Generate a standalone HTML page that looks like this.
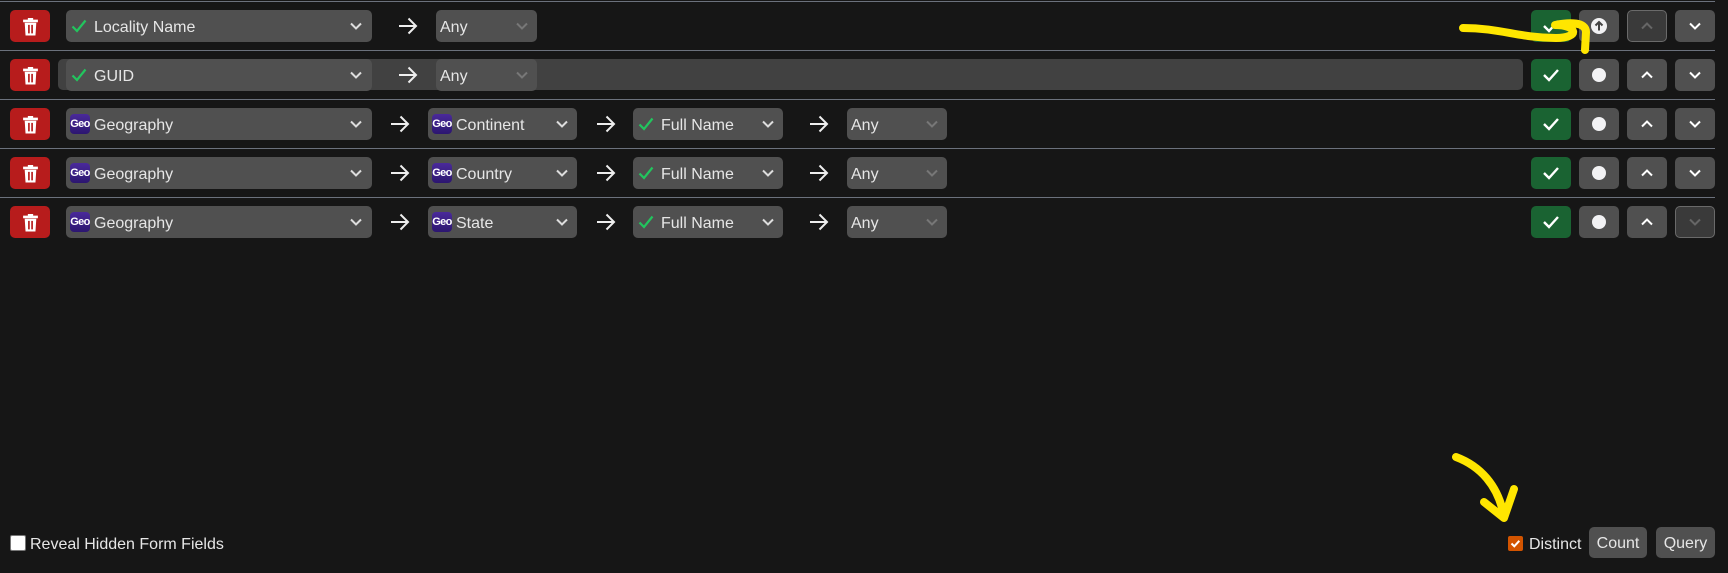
<!DOCTYPE html>
<html><head><meta charset="utf-8"><style>
*{box-sizing:border-box;margin:0;padding:0}
body{width:1728px;height:573px;background:#161616;font-family:"Liberation Sans",sans-serif;color:#e6e6e6;position:relative;overflow:hidden}
.a{position:absolute}
.sep{position:absolute;left:0;width:1715px;height:1px;background:#6b717c}
.tr{position:absolute;left:10px;width:40px;height:32px;background:#b71c1c;border-radius:5px;display:flex;align-items:center;justify-content:center}
.sel{position:absolute;height:32px;background:#505050;border-radius:5px;font-size:16px;display:flex;align-items:center}
.sel .t{position:absolute;top:9px}
.chev{position:absolute;top:12px}
.geo{position:absolute;top:6px;width:20px;height:20px;border-radius:4px;background:linear-gradient(#4a2a9a,#2c1670);color:#fff;font-size:11px;font-weight:bold;display:flex;align-items:center;justify-content:center;letter-spacing:-0.6px}
.btn{position:absolute;width:40px;height:32px;border-radius:5px;background:#505050;display:flex;align-items:center;justify-content:center}
.g{background:#1a6332}
.dis{background:#3a3a3a;border:1px solid #6a6a6a}
</style></head><body>
<div class="sep" style="top:1px"></div>
<div class="sep" style="top:50px"></div>
<div class="sep" style="top:99px"></div>
<div class="sep" style="top:148px"></div>
<div class="sep" style="top:197px"></div>

<div class="a" style="left:58px;top:59px;width:1465px;height:31px;background:#414141;border-radius:5px"></div>

<svg width="0" height="0" style="position:absolute">
<defs>
<symbol id="trash" viewBox="0 0 16 18"><path d="M1 2.5h14v2.5H1z M5.5 1h5v2h-5z M2.5 5.5h11l-0.8 12H3.3z" fill="#fff"/><path d="M6.5 7.5v8M9.5 7.5v8" stroke="#b71c1c" stroke-width="1.6"/></symbol>
<symbol id="chev" viewBox="0 0 12 8"><path d="M1 1.5l5 5 5-5" fill="none" stroke="currentColor" stroke-width="2"/></symbol>
<symbol id="chk" viewBox="0 0 16 14"><path d="M1.5 7.5l4.5 4.5L14.5 1.5" fill="none" stroke="#22c55e" stroke-width="2.2"/></symbol>
<symbol id="arr" viewBox="0 0 20 18"><path d="M1 9h17M10.5 1.5L18 9l-7.5 7.5" fill="none" stroke="#eee" stroke-width="2"/></symbol>
<symbol id="wchk" viewBox="0 0 18 14"><path d="M2 7l5 5L16 2" fill="none" stroke="#fff" stroke-width="2.4"/></symbol>
</defs></svg>

<div class="tr" style="top:10px"><svg width="17" height="19"><use href="#trash"/></svg></div>
<div class="sel" style="left:66px;top:10px;width:306px"><svg class="a" style="left:5px;top:9px" width="16" height="14"><use href="#chk"/></svg><span class="t" style="left:28px">Locality Name</span><svg class="chev" style="left:284px;color:#ddd" width="12" height="8"><use href="#chev"/></svg></div>
<svg class="a" style="left:398px;top:17px" width="20" height="18"><use href="#arr"/></svg>
<div class="sel" style="left:436px;top:10px;width:101px"><span class="t" style="left:4px">Any</span><svg class="chev" style="left:80px;color:#777" width="12" height="8"><use href="#chev"/></svg></div>

<div class="tr" style="top:59px"><svg width="17" height="19"><use href="#trash"/></svg></div>
<div class="sel" style="left:66px;top:59px;width:306px"><svg class="a" style="left:5px;top:9px" width="16" height="14"><use href="#chk"/></svg><span class="t" style="left:28px">GUID</span><svg class="chev" style="left:284px;color:#ddd" width="12" height="8"><use href="#chev"/></svg></div>
<svg class="a" style="left:398px;top:66px" width="20" height="18"><use href="#arr"/></svg>
<div class="sel" style="left:436px;top:59px;width:101px"><span class="t" style="left:4px">Any</span><svg class="chev" style="left:80px;color:#777" width="12" height="8"><use href="#chev"/></svg></div>

<div class="tr" style="top:108px"><svg width="17" height="19"><use href="#trash"/></svg></div>
<div class="sel" style="left:66px;top:108px;width:306px"><div class="geo" style="left:4px">Geo</div><span class="t" style="left:28px">Geography</span><svg class="chev" style="left:284px;color:#ddd" width="12" height="8"><use href="#chev"/></svg></div>
<svg class="a" style="left:390px;top:115px" width="20" height="18"><use href="#arr"/></svg>
<div class="sel" style="left:428px;top:108px;width:149px"><div class="geo" style="left:4px">Geo</div><span class="t" style="left:28px">Continent</span><svg class="chev" style="left:128px;color:#ddd" width="12" height="8"><use href="#chev"/></svg></div>
<svg class="a" style="left:596px;top:115px" width="20" height="18"><use href="#arr"/></svg>
<div class="sel" style="left:633px;top:108px;width:150px"><svg class="a" style="left:5px;top:9px" width="16" height="14"><use href="#chk"/></svg><span class="t" style="left:28px">Full Name</span><svg class="chev" style="left:129px;color:#ddd" width="12" height="8"><use href="#chev"/></svg></div>
<svg class="a" style="left:809px;top:115px" width="20" height="18"><use href="#arr"/></svg>
<div class="sel" style="left:847px;top:108px;width:100px"><span class="t" style="left:4px">Any</span><svg class="chev" style="left:79px;color:#777" width="12" height="8"><use href="#chev"/></svg></div>

<div class="tr" style="top:157px"><svg width="17" height="19"><use href="#trash"/></svg></div>
<div class="sel" style="left:66px;top:157px;width:306px"><div class="geo" style="left:4px">Geo</div><span class="t" style="left:28px">Geography</span><svg class="chev" style="left:284px;color:#ddd" width="12" height="8"><use href="#chev"/></svg></div>
<svg class="a" style="left:390px;top:164px" width="20" height="18"><use href="#arr"/></svg>
<div class="sel" style="left:428px;top:157px;width:149px"><div class="geo" style="left:4px">Geo</div><span class="t" style="left:28px">Country</span><svg class="chev" style="left:128px;color:#ddd" width="12" height="8"><use href="#chev"/></svg></div>
<svg class="a" style="left:596px;top:164px" width="20" height="18"><use href="#arr"/></svg>
<div class="sel" style="left:633px;top:157px;width:150px"><svg class="a" style="left:5px;top:9px" width="16" height="14"><use href="#chk"/></svg><span class="t" style="left:28px">Full Name</span><svg class="chev" style="left:129px;color:#ddd" width="12" height="8"><use href="#chev"/></svg></div>
<svg class="a" style="left:809px;top:164px" width="20" height="18"><use href="#arr"/></svg>
<div class="sel" style="left:847px;top:157px;width:100px"><span class="t" style="left:4px">Any</span><svg class="chev" style="left:79px;color:#777" width="12" height="8"><use href="#chev"/></svg></div>

<div class="tr" style="top:206px"><svg width="17" height="19"><use href="#trash"/></svg></div>
<div class="sel" style="left:66px;top:206px;width:306px"><div class="geo" style="left:4px">Geo</div><span class="t" style="left:28px">Geography</span><svg class="chev" style="left:284px;color:#ddd" width="12" height="8"><use href="#chev"/></svg></div>
<svg class="a" style="left:390px;top:213px" width="20" height="18"><use href="#arr"/></svg>
<div class="sel" style="left:428px;top:206px;width:149px"><div class="geo" style="left:4px">Geo</div><span class="t" style="left:28px">State</span><svg class="chev" style="left:128px;color:#ddd" width="12" height="8"><use href="#chev"/></svg></div>
<svg class="a" style="left:596px;top:213px" width="20" height="18"><use href="#arr"/></svg>
<div class="sel" style="left:633px;top:206px;width:150px"><svg class="a" style="left:5px;top:9px" width="16" height="14"><use href="#chk"/></svg><span class="t" style="left:28px">Full Name</span><svg class="chev" style="left:129px;color:#ddd" width="12" height="8"><use href="#chev"/></svg></div>
<svg class="a" style="left:809px;top:213px" width="20" height="18"><use href="#arr"/></svg>
<div class="sel" style="left:847px;top:206px;width:100px"><span class="t" style="left:4px">Any</span><svg class="chev" style="left:79px;color:#777" width="12" height="8"><use href="#chev"/></svg></div>

<div class="btn g" style="left:1531px;top:10px"><svg width="18" height="14"><use href="#wchk"/></svg></div>
<div class="btn" style="left:1579px;top:10px"><svg width="16" height="16" viewBox="0 0 16 16"><circle cx="8" cy="8" r="8" fill="#f2f2f4"/><path d="M8 12.5V4M4.5 7.5L8 4l3.5 3.5" fill="none" stroke="#444" stroke-width="2"/></svg></div>
<div class="btn dis" style="left:1627px;top:10px"><svg width="12" height="8" style="color:#666;transform:rotate(180deg)"><use href="#chev"/></svg></div>
<div class="btn" style="left:1675px;top:10px"><svg width="12" height="8" style="color:#fff"><use href="#chev"/></svg></div>

<div class="btn g" style="left:1531px;top:59px"><svg width="18" height="14"><use href="#wchk"/></svg></div>
<div class="btn" style="left:1579px;top:59px"><svg width="14" height="14"><circle cx="7" cy="7" r="7" fill="#f2f2f4"/></svg></div>
<div class="btn" style="left:1627px;top:59px"><svg width="12" height="8" style="color:#fff;transform:rotate(180deg)"><use href="#chev"/></svg></div>
<div class="btn" style="left:1675px;top:59px"><svg width="12" height="8" style="color:#fff"><use href="#chev"/></svg></div>

<div class="btn g" style="left:1531px;top:108px"><svg width="18" height="14"><use href="#wchk"/></svg></div>
<div class="btn" style="left:1579px;top:108px"><svg width="14" height="14"><circle cx="7" cy="7" r="7" fill="#f2f2f4"/></svg></div>
<div class="btn" style="left:1627px;top:108px"><svg width="12" height="8" style="color:#fff;transform:rotate(180deg)"><use href="#chev"/></svg></div>
<div class="btn" style="left:1675px;top:108px"><svg width="12" height="8" style="color:#fff"><use href="#chev"/></svg></div>

<div class="btn g" style="left:1531px;top:157px"><svg width="18" height="14"><use href="#wchk"/></svg></div>
<div class="btn" style="left:1579px;top:157px"><svg width="14" height="14"><circle cx="7" cy="7" r="7" fill="#f2f2f4"/></svg></div>
<div class="btn" style="left:1627px;top:157px"><svg width="12" height="8" style="color:#fff;transform:rotate(180deg)"><use href="#chev"/></svg></div>
<div class="btn" style="left:1675px;top:157px"><svg width="12" height="8" style="color:#fff"><use href="#chev"/></svg></div>

<div class="btn g" style="left:1531px;top:206px"><svg width="18" height="14"><use href="#wchk"/></svg></div>
<div class="btn" style="left:1579px;top:206px"><svg width="14" height="14"><circle cx="7" cy="7" r="7" fill="#f2f2f4"/></svg></div>
<div class="btn" style="left:1627px;top:206px"><svg width="12" height="8" style="color:#fff;transform:rotate(180deg)"><use href="#chev"/></svg></div>
<div class="btn dis" style="left:1675px;top:206px"><svg width="12" height="8" style="color:#666"><use href="#chev"/></svg></div>

<div class="a" style="left:10px;top:535px;width:16px;height:16px;background:#fff;border:1px solid #777;border-radius:2px"></div>
<div class="a" style="left:30px;top:536px;font-size:16px;color:#e6e6e6">Reveal Hidden Form Fields</div>

<div class="a" style="left:1508px;top:536px;width:15px;height:15px;background:#d35400;border-radius:2px"><svg width="15" height="15" viewBox="0 0 15 15"><path d="M3.5 7.5l2.8 2.8 5-5.5" fill="none" stroke="#fff" stroke-width="2"/></svg></div>
<div class="a" style="left:1529px;top:536px;font-size:16px">Distinct</div>
<div class="a" style="left:1589px;top:527px;width:58px;height:31px;background:#505050;border-radius:5px;font-size:16px;text-align:center;line-height:33px">Count</div>
<div class="a" style="left:1656px;top:527px;width:59px;height:31px;background:#505050;border-radius:5px;font-size:16px;text-align:center;line-height:33px">Query</div>

<svg class="a" style="left:0;top:0" width="1728" height="573">
<path d="M1463 28 C1500 28 1520 38 1556 38 C1580 38 1578 25 1555 25 C1570 22 1586 22 1586 32 L1585 50" fill="none" stroke="#ffe600" stroke-width="8" stroke-linecap="round" stroke-linejoin="round"/>
<path d="M1456 457 C1480 466 1498 485 1504 516 M1484 502 L1504 518 L1514 489" fill="none" stroke="#ffe600" stroke-width="8" stroke-linecap="round" stroke-linejoin="round"/>
</svg>
</body></html>
